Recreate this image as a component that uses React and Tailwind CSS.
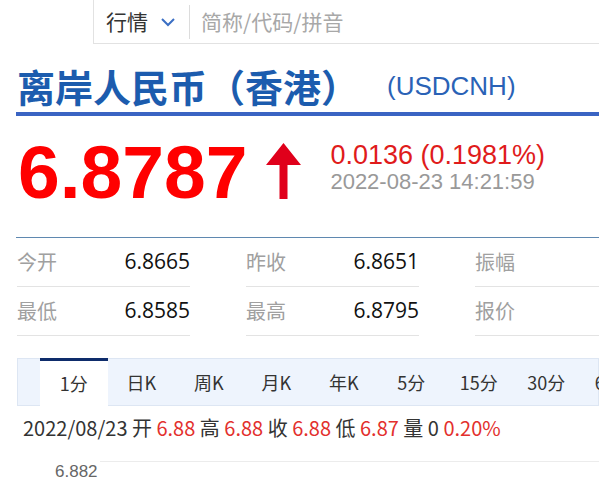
import React from "react";

const cjk = { fontFamily: '"Noto Sans CJK SC", "Noto Sans", sans-serif' };

const stats = [
  [
    { label: "今开", value: "6.8665" },
    { label: "昨收", value: "6.8651" },
    { label: "振幅", value: "" },
  ],
  [
    { label: "最低", value: "6.8585" },
    { label: "最高", value: "6.8795" },
    { label: "报价", value: "" },
  ],
];

const tabs = ["1分", "日K", "周K", "月K", "年K", "5分", "15分", "30分", "60分"];

const App = () => {
  return (
    <div className="w-[599px] h-[483px] overflow-hidden bg-white" style={cjk}>
      {/* search bar */}
      <div className="ml-[93px] h-[44px] border-l border-b border-[#e2e2e2] flex items-center">
        <span className="ml-[12px] text-[21px] text-[#333]">行情</span>
        <svg className="ml-[12px]" width="16" height="10" viewBox="0 0 16 10">
          <path d="M2 2 L8 8 L14 2" fill="none" stroke="#3b6fc4" strokeWidth="2" />
        </svg>
        <div className="ml-[13px] w-px h-[34px] bg-[#dcdcdc]"></div>
        <span className="ml-[11px] text-[21px] text-[#a8a8a8]">简称/代码/拼音</span>
      </div>

      {/* title */}
      <div className="mt-[22px] h-[40px] flex items-center pl-[17px]">
        <span className="text-[38px] font-bold text-[#1c5cae] leading-none">离岸人民币（香港）</span>
        <span
          className="ml-[28px] text-[26px] text-[#2a62b6] leading-none"
          style={{ fontFamily: '"Liberation Sans", Arial, sans-serif' }}
        >
          (USDCNH)
        </span>
      </div>
      <div className="mt-[6px] ml-[16px] h-[4px] bg-[#3a64c3]"></div>

      {/* price */}
      <div
        className="h-[121px] flex items-start pl-[18px] pt-[19px]"
        style={{ fontFamily: '"Liberation Sans", Arial, sans-serif' }}
      >
        <span className="text-[75px] leading-[75px] font-bold text-[#ff0000]">6.8787</span>
        <svg className="ml-[18px] mt-[8px]" width="37" height="56" viewBox="0 0 37 56">
          <polygon points="18.5,0 36,22 22.5,22 22.5,56 14.5,56 14.5,22 1,22" fill="#e0001b" />
        </svg>
        <div className="ml-[28px] mt-[6px] flex flex-col">
          <span className="text-[27px] leading-[28px] text-[#e01b1b]">0.0136 (0.1981%)</span>
          <span className="text-[22px] leading-[26px] text-[#999]">2022-08-23 14:21:59</span>
        </div>
      </div>

      {/* stats */}
      <div className="ml-[16px] border-t border-[#5f88b0] pl-[1px] grid grid-cols-[173px_173px_1fr] gap-x-[56px]">
        {stats.map((row) =>
          row.map((s) => (
            <div
              key={s.label}
              className="h-[49px] flex items-center justify-between border-b border-[#e3e3e3]"
            >
              <span className="text-[20px] text-[#a0a0a0]">{s.label}</span>
              <span
                className="text-[21px] text-[#111]"
                style={{ fontFamily: '"Open Sans", "Noto Sans", sans-serif' }}
              >
                {s.value}
              </span>
            </div>
          ))
        )}
      </div>

      {/* tabs */}
      <div className="mt-[22px] ml-[17px] h-[48px] bg-[#eef4fd] border border-[#dde6f3] pl-[22px] flex">
        {tabs.map((t, i) => (
          <div
            key={t}
            className={
              i === 0
                ? "w-[67.5px] shrink-0 -mt-px -mb-px bg-white border-t-[3px] border-[#0e2c6b] flex items-center justify-center text-[18px] text-[#333]"
                : "w-[67.5px] shrink-0 flex items-center justify-center text-[18px] text-[#333]"
            }
          >
            {t}
          </div>
        ))}
      </div>

      {/* info line */}
      <div className="mt-[9px] pl-[23px] h-[26px] leading-[26px] text-[20px] text-[#333] whitespace-nowrap">
        2022/08/23 开 <span className="text-[#e3302d]">6.88</span> 高{" "}
        <span className="text-[#e3302d]">6.88</span> 收{" "}
        <span className="text-[#e3302d]">6.88</span> 低{" "}
        <span className="text-[#e3302d]">6.87</span> 量 0{" "}
        <span className="text-[#e3302d]">0.20%</span>
      </div>

      {/* chart top */}
      <div className="mt-[20px] flex">
        <span
          className="w-[100px] pl-[55px] pt-[1px] text-[17px] leading-[20px] text-[#666]"
          style={{ fontFamily: '"Liberation Sans", Arial, sans-serif' }}
        >
          6.882
        </span>
        <div className="flex-1 border-t border-[#ececec]"></div>
      </div>
    </div>
  );
};

export default App;
